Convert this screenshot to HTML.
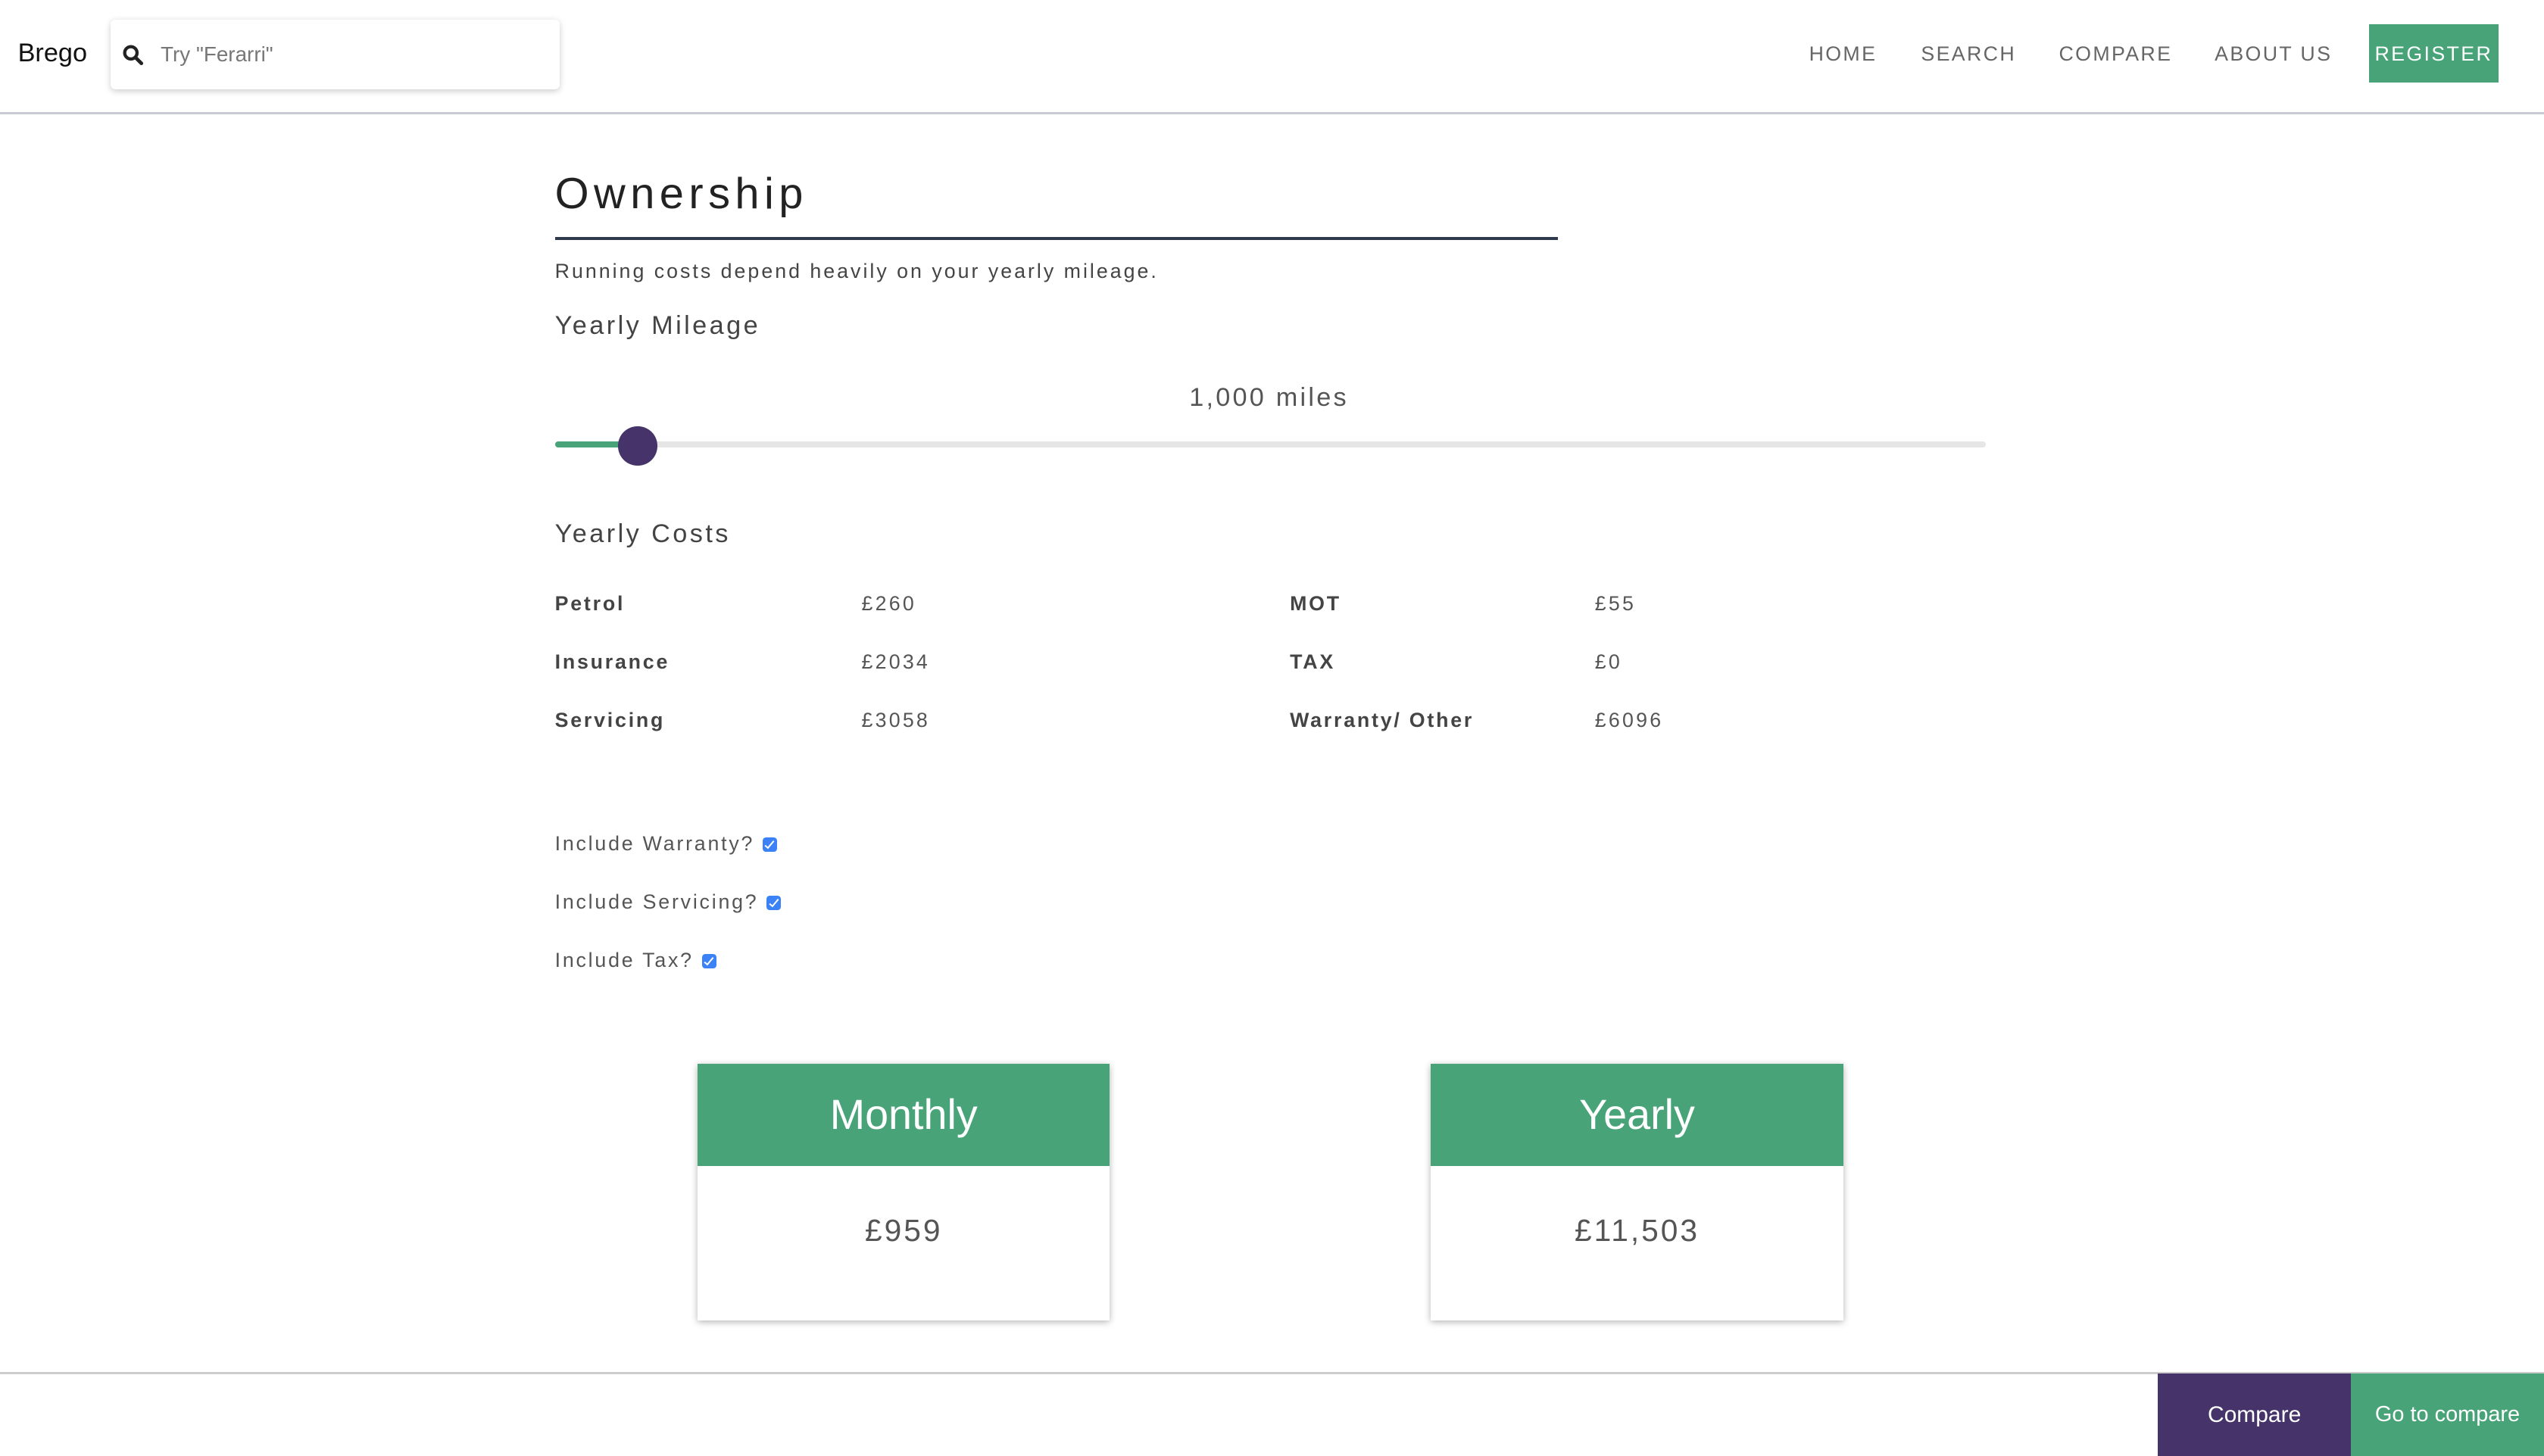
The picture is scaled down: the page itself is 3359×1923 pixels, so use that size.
<!DOCTYPE html>
<html><head><meta charset="utf-8"><style>
html,body{margin:0;padding:0;background:#fff;overflow:hidden}
body{width:3359px;height:1923px}
#w{zoom:2.14222;width:1568px;height:898px;position:relative;font-family:"Liberation Sans",sans-serif;color:#444}
.a{position:absolute;white-space:nowrap}
.nav{font-size:12.5px;letter-spacing:1.1px;color:#666;top:26px}
.lbl{font-size:12.5px;letter-spacing:1.3px;font-weight:bold;color:#444}
.val{font-size:12.5px;letter-spacing:1.5px;color:#555}
.inc{font-size:12.5px;letter-spacing:1.3px;color:#555}
.cb{display:inline-block;width:9px;height:9px;background:#3b82f6;border-radius:2px;vertical-align:-1px;margin-left:5px;position:relative}
.cb:after{content:"";position:absolute;left:3px;top:1px;width:2px;height:5px;border:solid #fff;border-width:0 1px 1px 0;transform:rotate(40deg)}
.card{position:absolute;width:254px;height:158px;background:#fff;box-shadow:0 1px 4px rgba(0,0,0,.3)}
.card .h{height:63px;background:#48a378;color:#fff;font-size:26px;text-align:center;line-height:63px}
.card .v{text-align:center;font-size:19px;letter-spacing:1.4px;color:#555;margin-top:29px}
</style></head><body><div id="w">
<div class="a" style="left:0;top:0;width:1568px;height:69px;border-bottom:1.5px solid #c8ccd2"></div>
<div class="a" style="left:11px;top:24px;font-size:16px;color:#111">Brego</div>
<div class="a" style="left:68px;top:12px;width:277px;height:43px;border-radius:3px;box-shadow:0 1px 4px rgba(0,0,0,.2);background:#fff"></div>
<svg class="a" style="left:75px;top:27px" width="14" height="14" viewBox="0 0 14 14"><circle cx="5.5" cy="5.5" r="3.8" fill="none" stroke="#222" stroke-width="2"/><path d="M8.3 8.3L12 12" stroke="#222" stroke-width="2.2" stroke-linecap="round"/></svg>
<div class="a" style="left:99px;top:26px;font-size:13px;color:#777">Try "Ferarri"</div>
<div class="a nav" style="left:1115px">HOME</div>
<div class="a nav" style="left:1184px">SEARCH</div>
<div class="a nav" style="left:1269px">COMPARE</div>
<div class="a nav" style="left:1365px">ABOUT US</div>
<div class="a" style="left:1460px;top:15px;width:80px;height:36px;background:#48a378;color:#fff;font-size:12.5px;letter-spacing:1.1px;line-height:37px;text-align:center">REGISTER</div>
<div class="a" style="left:342px;top:104px;font-size:27px;letter-spacing:3px;color:#222">Ownership</div>
<div class="a" style="left:342px;top:146px;width:618px;height:2px;background:#2e3a4e"></div>
<div class="a" style="left:342px;top:160px;font-size:12.5px;letter-spacing:1.4px;color:#444">Running costs depend heavily on your yearly mileage.</div>
<div class="a" style="left:342px;top:192px;font-size:16px;letter-spacing:1.6px;color:#444">Yearly Mileage</div>
<div class="a" style="left:733px;top:236px;font-size:16px;letter-spacing:1.5px;color:#555">1,000 miles</div>
<div class="a" style="left:342px;top:272px;width:882px;height:4px;background:#e6e6e6;border-radius:2px"></div>
<div class="a" style="left:342px;top:272px;width:50px;height:4px;background:#48a378;border-radius:2px"></div>
<div class="a" style="left:381px;top:263px;width:24px;height:24px;background:#45336a;border-radius:50%"></div>
<div class="a" style="left:342px;top:320px;font-size:16px;letter-spacing:1.6px;color:#444">Yearly Costs</div>
<div class="a lbl" style="left:342px;top:365px">Petrol</div><div class="a val" style="left:531px;top:365px">£260</div>
<div class="a lbl" style="left:342px;top:401px">Insurance</div><div class="a val" style="left:531px;top:401px">£2034</div>
<div class="a lbl" style="left:342px;top:437px">Servicing</div><div class="a val" style="left:531px;top:437px">£3058</div>
<div class="a lbl" style="left:795px;top:365px">MOT</div><div class="a val" style="left:983px;top:365px">£55</div>
<div class="a lbl" style="left:795px;top:401px">TAX</div><div class="a val" style="left:983px;top:401px">£0</div>
<div class="a lbl" style="left:795px;top:437px">Warranty/ Other</div><div class="a val" style="left:983px;top:437px">£6096</div>
<div class="a inc" style="left:342px;top:513px">Include Warranty?<span class="cb"></span></div>
<div class="a inc" style="left:342px;top:549px">Include Servicing?<span class="cb"></span></div>
<div class="a inc" style="left:342px;top:585px">Include Tax?<span class="cb"></span></div>
<div class="card" style="left:430px;top:656px"><div class="h">Monthly</div><div class="v">£959</div></div>
<div class="card" style="left:882px;top:656px"><div class="h">Yearly</div><div class="v">£11,503</div></div>
<div class="a" style="left:0;top:846px;width:1568px;height:52px;background:#fff;border-top:1.5px solid #ccc"></div>
<div class="a" style="left:1330px;top:847px;width:119px;height:51px;background:#45336a;color:#fff;font-size:14px;line-height:51px;text-align:center">Compare</div>
<div class="a" style="left:1449px;top:847px;width:119px;height:51px;background:#48a378;color:#fff;font-size:13.5px;line-height:51px;text-align:center">Go to compare</div>
</div></body></html>
